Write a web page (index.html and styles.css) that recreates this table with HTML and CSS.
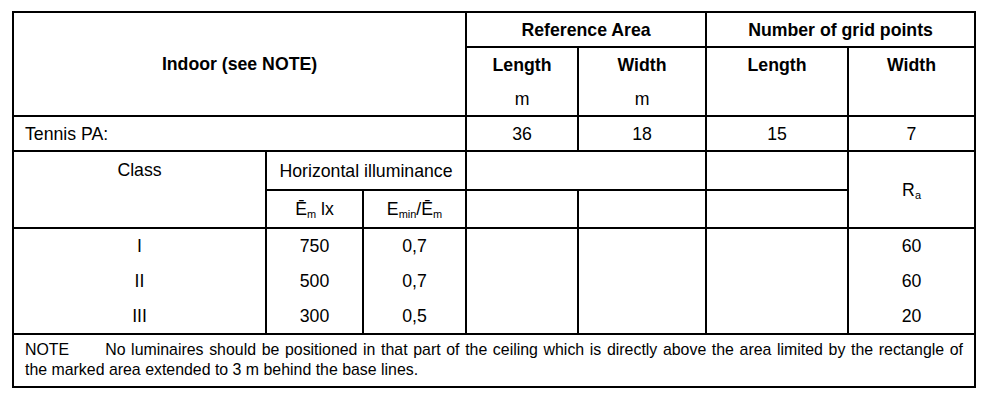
FILE: index.html
```html
<!DOCTYPE html>
<html>
<head>
<meta charset="utf-8">
<link rel="stylesheet" href="styles.css">
</head>
<body>
<table class="tbl">
  <colgroup>
    <col class="c1"><col class="c2"><col class="c3"><col class="c4"><col class="c5"><col class="c6"><col class="c7">
  </colgroup>
  <tr class="r-h1">
    <td class="b" colspan="3" rowspan="3">Indoor (see NOTE)</td>
    <td class="b" colspan="2">Reference Area</td>
    <td class="b" colspan="2">Number of grid points</td>
  </tr>
  <tr class="r-h2">
    <td class="b">Length</td>
    <td class="b">Width</td>
    <td class="b">Length</td>
    <td class="b">Width</td>
  </tr>
  <tr class="r-h3 cont">
    <td>m</td>
    <td>m</td>
    <td></td>
    <td></td>
  </tr>
  <tr class="r-t">
    <td class="left" colspan="3">Tennis PA:</td>
    <td>36</td>
    <td>18</td>
    <td>15</td>
    <td>7</td>
  </tr>
  <tr class="r-c1">
    <td class="top" rowspan="2">Class</td>
    <td colspan="2">Horizontal illuminance</td>
    <td colspan="2"></td>
    <td></td>
    <td rowspan="2">R<span class="sub">a</span></td>
  </tr>
  <tr class="r-c2">
    <td>Ē<span class="sub">m</span> lx</td>
    <td>E<span class="sub">min</span>/Ē<span class="sub">m</span></td>
    <td></td>
    <td></td>
    <td></td>
  </tr>
  <tr class="r-d">
    <td>I</td><td>750</td><td>0,7</td><td></td><td></td><td></td><td>60</td>
  </tr>
  <tr class="r-d cont">
    <td>II</td><td>500</td><td>0,7</td><td></td><td></td><td></td><td>60</td>
  </tr>
  <tr class="r-d3 cont">
    <td>III</td><td>300</td><td>0,5</td><td></td><td></td><td></td><td>20</td>
  </tr>
  <tr class="r-n">
    <td class="note" colspan="7"><p class="note-text"><span class="note-label">NOTE</span><span class="note-body">No luminaires should be positioned in that part of the ceiling which is directly above the area limited by the rectangle of the marked area extended to 3 m behind the base lines.</span></p></td>
  </tr>
</table>
</body>
</html>
```
FILE: styles.css
```css
html, body {
  background: #ffffff;
}
body {
  margin: 0;
  padding: 11px 0 0 12px;
  font-family: "Liberation Sans", Arial, sans-serif;
  font-size: 17.7px;
  color: #000000;
}
.tbl {
  border-collapse: collapse;
  table-layout: fixed;
  width: 964px;
}
.c1 { width: 253px; }
.c2 { width: 97px; }
.c3 { width: 103px; }
.c4 { width: 112px; }
.c5 { width: 128px; }
.c6 { width: 142px; }
.c7 { width: 127px; }
.tbl td {
  border: 2px solid #000000;
  padding: 0 11px;
  text-align: center;
  vertical-align: middle;
  line-height: 20px;
}
.tbl .b {
  font-weight: bold;
}
.tbl .left {
  text-align: left;
}
.tbl .top {
  vertical-align: top;
  padding-top: 8px;
}
.cont td {
  border-top-style: hidden;
}
.r-h1 { height: 35px; }
.r-h2 { height: 35px; }
.r-h3 { height: 34px; }
.r-t { height: 35px; }
.r-c1 { height: 39px; }
.r-c2 { height: 38px; }
.r-d { height: 35px; }
.r-d3 { height: 36px; }
.r-n { height: 53px; }
.sub {
  font-size: 0.62em;
  vertical-align: -0.3em;
  line-height: 0;
}
.tbl .note {
  font-size: 15.9px;
  padding: 5px 11px 6px 11px;
}
.note-text {
  margin: 0;
  text-align: justify;
}
.note-label {
  padding-right: 36px;
}
```
